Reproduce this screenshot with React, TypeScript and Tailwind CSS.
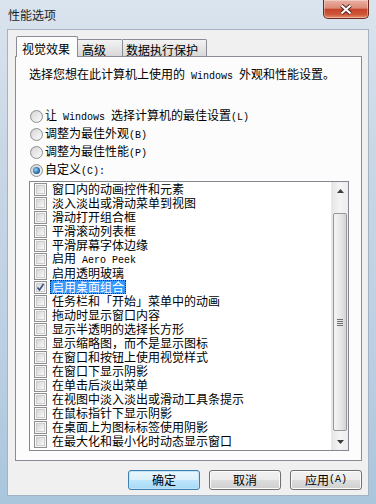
import React from 'react';

const ITEMS = [
  '窗口内的动画控件和元素',
  '淡入淡出或滑动菜单到视图',
  '滑动打开组合框',
  '平滑滚动列表框',
  '平滑屏幕字体边缘',
  '启用 Aero Peek',
  '启用透明玻璃',
  '启用桌面组合',
  '任务栏和「开始」菜单中的动画',
  '拖动时显示窗口内容',
  '显示半透明的选择长方形',
  '显示缩略图，而不是显示图标',
  '在窗口和按钮上使用视觉样式',
  '在窗口下显示阴影',
  '在单击后淡出菜单',
  '在视图中淡入淡出或滑动工具条提示',
  '在鼠标指针下显示阴影',
  '在桌面上为图标标签使用阴影',
  '在最大化和最小化时动态显示窗口',
];

const SELECTED = 7;

const RADIOS = [
  { label: '让 Windows 选择计算机的最佳设置(L)', checked: false },
  { label: '调整为最佳外观(B)', checked: false },
  { label: '调整为最佳性能(P)', checked: false },
  { label: '自定义(C):', checked: true },
];

// half-width latin runs get a mono face so they take 6px a char, like SimSun
function Mixed({ text }: { text: string }) {
  const parts = text.split(/([\x20-\x7e]+)/).filter(Boolean);
  return (
    <>
      {parts.map((p, i) =>
        /^[\x20-\x7e]+$/.test(p) ? (
          <span key={i} className="whitespace-pre font-['Liberation_Mono',monospace] text-[10px]">
            {p}
          </span>
        ) : (
          <span key={i}>{p}</span>
        )
      )}
    </>
  );
}

function Checkbox({ checked }: { checked?: boolean }) {
  return (
    <span className="relative flex h-[13px] w-[13px] shrink-0 items-center justify-center border border-[#8f8f8f] bg-[#f6f6f6]">
      <span className="h-[9px] w-[9px] border border-[#cdcdcd] bg-gradient-to-br from-[#d6d6d6] to-[#f9f9f9]" />
      {checked && (
        <svg className="absolute left-0 top-0" width="11" height="11" viewBox="0 0 11 11">
          <path d="M2.5 5.5 L4.5 8 L8.5 2" fill="none" stroke="#3d4f80" strokeWidth="1.6" />
        </svg>
      )}
    </span>
  );
}

function Radio({ checked }: { checked?: boolean }) {
  return (
    <span className="flex h-[13px] w-[13px] shrink-0 items-center justify-center rounded-full border border-[#8f8f8f] bg-gradient-to-br from-[#cfcfcf] to-[#fbfbfb]">
      {checked ? (
        <span className="h-[7px] w-[7px] rounded-full bg-[radial-gradient(circle_at_40%_40%,#9bd6fa_0%,#2a6fb0_55%,#0d3461_100%)]" />
      ) : (
        <span className="h-[9px] w-[9px] rounded-full bg-gradient-to-br from-[#dadada] to-[#f7f7f7]" />
      )}
    </span>
  );
}

function Arrow({ up }: { up?: boolean }) {
  return (
    <div className="flex h-[17px] items-center justify-center">
      <svg width="7" height="4" viewBox="0 0 7 4">
        <path d={up ? 'M3.5 0 L7 4 L0 4Z' : 'M0 0 L7 0 L3.5 4Z'} fill="#3c3c3c" />
      </svg>
    </div>
  );
}

function Button({ label, primary }: { label: string; primary?: boolean }) {
  return (
    <div
      className={`flex h-[20px] w-[72px] items-center justify-center rounded-[3px] border ${
        primary
          ? 'border-[#3c7fb1] bg-[linear-gradient(180deg,#eaf6fd_0%,#d9f0fc_50%,#bee6fd_51%,#a7d9f5_100%)] shadow-[inset_0_0_0_1px_#c2e4f6]'
          : 'border-[#707070] bg-[linear-gradient(180deg,#f2f2f2_0%,#ebebeb_50%,#dddddd_51%,#cfcfcf_100%)] shadow-[inset_0_0_0_1px_#fcfcfc]'
      }`}
    >
      <Mixed text={label} />
    </div>
  );
}

export default function App() {
  return (
    <div className="h-[504px] w-[376px] overflow-hidden bg-[linear-gradient(180deg,#dae4ee_0%,#c9d7e5_30%,#bccfe3_70%,#a9c6dc_100%)] font-['Noto_Sans_CJK_SC',sans-serif] text-[12px] leading-[14px] text-black">
      {/* Title bar */}
      <div className="flex h-[29px] items-start justify-between pl-[8px] pr-[7px]">
        <span className="pt-[8px] text-[#1e1e1e]">性能选项</span>
        <div className="flex h-[19px] w-[46px] items-center justify-center rounded-b-[5px] border border-t-0 border-[#6b2a22] bg-[linear-gradient(180deg,#eab0a3_0%,#dc8a78_45%,#c5432a_52%,#cf5638_80%,#e5906c_100%)] shadow-[inset_0_0_0_1px_rgba(255,255,255,0.35)]">
          <svg width="14" height="11" viewBox="0 0 14 11">
            <path d="M2.5 1.5 L11.5 9.5 M11.5 1.5 L2.5 9.5" stroke="#4a1a14" strokeWidth="3.8" />
            <path d="M2.5 1.5 L11.5 9.5 M11.5 1.5 L2.5 9.5" stroke="#ffffff" strokeWidth="2.2" />
          </svg>
        </div>
      </div>

      {/* Client area */}
      <div className="mx-[7px] flex h-[467px] flex-col border border-[#a3b3c4] bg-[#f0f0f0] pl-[7px] pt-[6px]">
        {/* Tabs */}
        <div className="relative z-10 flex h-[21px] items-end pl-[1px]">
          <div className="h-[21px] w-[62px] rounded-t-[2px] border border-b-0 border-[#898c95] bg-[#fcfcfc] pl-[5px] pt-[5px]">
            视觉效果
          </div>
          <div className="mb-[1px] h-[17px] w-[45px] rounded-tr-[2px] border border-b-0 border-l-0 border-[#898c95] bg-gradient-to-b from-[#f3f3f3] to-[#d8d8d8] pl-[4px] pt-[3px]">
            高级
          </div>
          <div className="mb-[1px] h-[17px] w-[84px] rounded-tr-[2px] border border-b-0 border-l-0 border-[#898c95] bg-gradient-to-b from-[#f3f3f3] to-[#d8d8d8] pl-[3px] pt-[3px]">
            数据执行保护
          </div>
        </div>

        {/* Tab panel */}
        <div className="-mt-px flex h-[405px] w-[347px] flex-col border border-[#898c95] bg-[#fcfcfc] pl-[13px]">
          <p className="mt-[10px]">
            <Mixed text="选择您想在此计算机上使用的 Windows 外观和性能设置。" />
          </p>

          <div className="mt-[23px] flex flex-col pl-[1px]">
            {RADIOS.map((r) => (
              <div key={r.label} className="flex h-[18px] items-center gap-[2px]">
                <Radio checked={r.checked} />
                <span>
                  <Mixed text={r.label} />
                </span>
              </div>
            ))}
          </div>

          {/* List box */}
          <div className="mt-[2px] flex h-[270px] w-[320px] border border-[#828790] bg-white">
            <div className="flex flex-1 flex-col pl-[4px]">
              {ITEMS.map((item, i) => (
                <div key={item} className="flex h-[14px] items-center gap-[3px]">
                  <Checkbox checked={i === SELECTED} />
                  <span
                    className={
                      i === SELECTED
                        ? 'flex h-[14px] items-center border border-dotted border-[#0b2f6b] bg-[#3399ff] px-[1px] text-white'
                        : 'px-[2px]'
                    }
                  >
                    <Mixed text={item} />
                  </span>
                </div>
              ))}
            </div>

            {/* Scrollbar */}
            <div className="flex w-[17px] flex-col border-l border-[#e8e8e8] bg-[linear-gradient(90deg,#e6e6e6_0%,#f4f4f4_50%,#ececec_100%)]">
              <Arrow up />
              <div className="flex flex-1 flex-col px-[1px] pb-[2px] pt-[14px]">
                <div className="flex flex-1 items-center justify-center rounded-[2px] border border-[#979797] bg-[linear-gradient(90deg,#f4f4f4_0%,#e9e9e9_50%,#d4d4d4_100%)]">
                  <div className="flex flex-col gap-[1px]">
                    <span className="h-px w-[6px] bg-[#6f6f6f]" />
                    <span className="h-px w-[6px] bg-[#6f6f6f]" />
                    <span className="h-px w-[6px] bg-[#6f6f6f]" />
                    <span className="h-px w-[6px] bg-[#6f6f6f]" />
                  </div>
                </div>
              </div>
              <Arrow />
            </div>
          </div>
        </div>

        {/* Buttons */}
        <div className="mt-[9px] flex w-[347px] justify-end gap-[9px]">
          <Button label="确定" primary />
          <Button label="取消" />
          <Button label="应用(A)" />
        </div>
      </div>
    </div>
  );
}
